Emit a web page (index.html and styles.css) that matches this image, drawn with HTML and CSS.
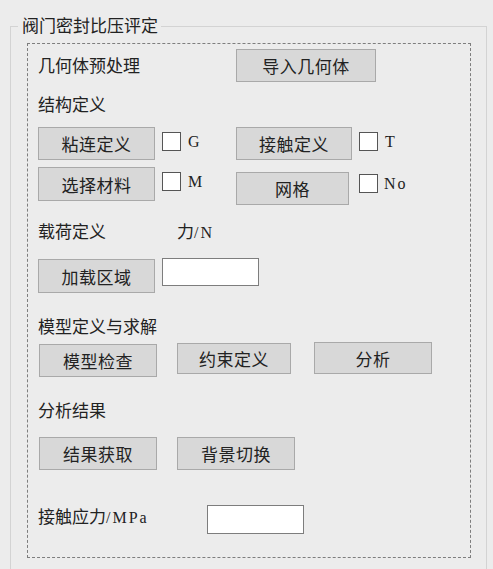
FILE: index.html
```html
<!DOCTYPE html>
<html lang="zh-CN">
<head>
<meta charset="utf-8">
<title>阀门密封比压评定</title>
<link rel="stylesheet" href="styles.css">
</head>
<body>
<div class="group">
  <div class="group-title">阀门密封比压评定</div>
  <div class="panel">
    <div class="row row-geo">
      <div class="label col-left">几何体预处理</div>
      <div class="btn btn-import">导入几何体</div>
    </div>
    <div class="label sec sec-struct">结构定义</div>
    <div class="row row-bond">
      <div class="cell">
        <div class="btn btn-std">粘连定义</div>
        <div class="check"></div>
        <div class="latin">G</div>
      </div>
      <div class="cell">
        <div class="btn btn-contact">接触定义</div>
        <div class="check"></div>
        <div class="latin">T</div>
      </div>
    </div>
    <div class="row row-mat">
      <div class="cell">
        <div class="btn btn-std btn-tall">选择材料</div>
        <div class="check"></div>
        <div class="latin">M</div>
      </div>
      <div class="cell cell-mesh">
        <div class="btn btn-mesh">网格</div>
        <div class="check"></div>
        <div class="latin">No</div>
      </div>
    </div>
    <div class="row sec sec-load">
      <div class="label load-label">载荷定义</div>
      <div class="label">力<span class="latin-inline">/N</span></div>
    </div>
    <div class="row row-area">
      <div class="btn btn-std btn-tall btn-area">加载区域</div>
      <div class="field field-force"></div>
    </div>
    <div class="label sec sec-model">模型定义与求解</div>
    <div class="row row-model">
      <div class="btn btn-check">模型检查</div>
      <div class="btn btn-constraint">约束定义</div>
      <div class="btn btn-analyze">分析</div>
    </div>
    <div class="label sec sec-result">分析结果</div>
    <div class="row row-result">
      <div class="btn btn-check">结果获取</div>
      <div class="btn btn-bg">背景切换</div>
    </div>
    <div class="row row-stress">
      <div class="label stress-label">接触应力<span class="latin-inline">/MPa</span></div>
      <div class="field field-stress"></div>
    </div>
  </div>
</div>
</body>
</html>
```

FILE: styles.css
```css
* { box-sizing: border-box; }

html, body {
  margin: 0;
  padding: 0;
  background: #ececec;
}

body {
  font-family: "Noto Sans CJK SC", "Noto Sans", sans-serif;
  font-size: 17px;
  color: #222;
  width: 493px;
  height: 569px;
  overflow: hidden;
}

.group {
  position: relative;
  margin: 26px 6px 0 10px;
  height: 544px;
  border: 1px solid #d3d3d3;
  padding: 16px 15px 0 16px;
}

.group-title {
  position: absolute;
  left: 7px;
  top: -12px;
  padding: 0 3px 0 4px;
  background: #ececec;
  line-height: 20px;
  height: 20px;
}

.panel {
  height: 515px;
  border: 1px dashed #7e7e7e;
  padding: 0 0 0 10px;
  display: flex;
  flex-direction: column;
}

.row {
  display: flex;
  align-items: flex-start;
}

.label {
  line-height: 17px;
  height: 17px;
  white-space: nowrap;
}

.btn {
  background: #d8d8d8;
  border: 1px solid #a9a9a9;
  height: 33px;
  display: flex;
  align-items: center;
  justify-content: center;
  white-space: nowrap;
  letter-spacing: 0.5px;
}

.check {
  width: 19px;
  height: 19px;
  background: #fff;
  border: 1px solid #555;
  margin-left: 7px;
}

.latin {
  font-family: "Liberation Serif", "DejaVu Serif", serif;
  font-size: 16px;
  line-height: 19px;
  margin-left: 7px;
  letter-spacing: 2px;
}

.latin-inline {
  font-family: "Liberation Serif", "DejaVu Serif", serif;
  font-size: 16px;
  letter-spacing: 2px;
}

.field {
  background: #fff;
  border: 1px solid #7d7d7d;
  width: 97px;
}

/* row 1 */
.row-geo {
  height: 42px;
}
.row-geo .label { margin-top: 12px; }
.row-geo .btn { margin-top: 5px; }
.col-left { width: 198px; }
.btn-import { width: 140px; }

/* section labels */
.sec-struct { margin-top: 9px; }
.sec-load { margin-top: 17px; height: 17px; }
.sec-model { margin-top: 24px; }
.sec-result { margin-top: 24px; }

/* bond / contact */
.row-bond { margin-top: 15px; }
.cell {
  display: flex;
  align-items: flex-start;
  width: 198px;
}
.cell .check { margin-top: 5px; }
.cell .latin { margin-top: 5px; }
.btn-std { width: 117px; }
.btn-contact { width: 116px; }

/* material / mesh */
.row-mat { margin-top: 7px; height: 38px; }
.btn-tall { height: 34px; }
.cell-mesh { margin-top: 5px; }
.cell-mesh .check { margin-top: 2px; margin-left: 10px; }
.cell-mesh .latin { margin-top: 2px; margin-left: 6px; }
.btn-mesh { width: 113px; }

/* load */
.load-label { width: 139px; }

.row-area { margin-top: 19px; }
.btn-area { margin-top: 1px; }
.field-force { height: 28px; margin-left: 7px; }

/* model */
.row-model { margin-top: 8px; height: 35px; }
.btn-check { width: 118px; margin-left: 1px; }
.row-model .btn-check { margin-top: 2px; }
.btn-constraint { width: 114px; height: 31px; margin-left: 20px; margin-top: 1px; }
.btn-analyze { width: 118px; height: 32px; margin-left: 23px; }

/* result */
.row-result { margin-top: 19px; }
.btn-bg { width: 118px; margin-left: 20px; }

/* stress */
.row-stress { margin-top: 35px; }
.stress-label { width: 169px; margin-top: 2px; }
.field-stress { height: 29px; }
```
